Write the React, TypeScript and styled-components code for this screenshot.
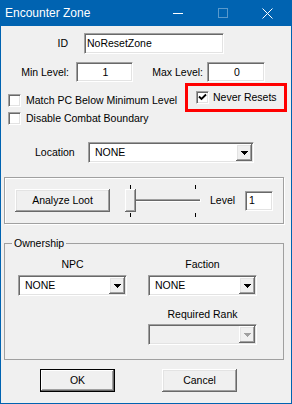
import React from "react";
import styled, { createGlobalStyle, css } from "styled-components";

const GlobalStyle = createGlobalStyle`
  html, body {
    margin: 0;
    padding: 0;
    background: #f0f0f0;
  }
`;

// shared 3D edges
const sunken = css`
  box-sizing: border-box;
  border-style: solid;
  border-width: 1px;
  border-color: #a0a0a0 #ffffff #ffffff #a0a0a0;
  box-shadow: inset 1px 1px 0 #696969, inset -1px -1px 0 #e3e3e3;
`;

const raised = css`
  box-sizing: border-box;
  background: #f0f0f0;
  box-shadow: inset -1px -1px 0 #696969, inset 1px 1px 0 #ffffff,
    inset -2px -2px 0 #a0a0a0, inset 2px 2px 0 #e3e3e3;
`;

const Window = styled.div`
  width: 292px;
  height: 404px;
  box-sizing: border-box;
  display: flex;
  flex-direction: column;
  border: 1px solid #0063b1;
  border-top: 0;
  background: #f0f0f0;
  color: #000;
  font-family: "Liberation Sans", Arial, sans-serif;
  font-size: 10.5px;
  line-height: 13px;
  overflow: hidden;
`;

const TitleBar = styled.div`
  flex: none;
  height: 26px;
  margin: 0 -1px;
  padding: 0 2px 0 5px;
  display: flex;
  align-items: center;
  background: #0063b1;
  color: #fff;
`;

const Title = styled.span`
  flex: 1;
  font-size: 12px;
`;

const CaptionButton = styled.span`
  width: 45px;
  height: 26px;
  display: flex;
  align-items: center;
  justify-content: center;
`;

const MinGlyph = styled.span`
  width: 10px;
  height: 1px;
  background: #fff;
`;

const MaxGlyph = styled.span`
  width: 10px;
  height: 10px;
  box-sizing: border-box;
  border: 1px solid rgba(255, 255, 255, 0.35);
`;

const Row = styled.div<{ $mt: number; $h: number }>`
  flex: none;
  display: flex;
  align-items: center;
  margin-top: ${(p) => p.$mt}px;
  height: ${(p) => p.$h}px;
`;

const Label = styled.span<{ $w?: number; $ml?: number; $right?: boolean }>`
  flex: none;
  white-space: nowrap;
  width: ${(p) => (p.$w ? `${p.$w}px` : "auto")};
  margin-left: ${(p) => p.$ml ?? 0}px;
  text-align: ${(p) => (p.$right ? "right" : "left")};
`;

const TextBox = styled.div<{ $w: number; $h: number; $ml: number; $center?: boolean; $pad?: number }>`
  ${sunken};
  flex: none;
  width: ${(p) => p.$w}px;
  height: ${(p) => p.$h}px;
  margin-left: ${(p) => p.$ml}px;
  padding-left: ${(p) => p.$pad ?? 2}px;
  background: #fff;
  display: flex;
  align-items: center;
  justify-content: ${(p) => (p.$center ? "center" : "flex-start")};
`;

const CheckColumn = styled.div`
  flex: none;
  align-self: stretch;
  width: 184px;
  box-sizing: border-box;
  padding: 11px 0 0 7px;
  display: flex;
  flex-direction: column;
  gap: 5px;
`;

const CheckRow = styled.label`
  height: 13px;
  display: flex;
  align-items: center;
  gap: 5px;
  white-space: nowrap;
`;

const Box = styled.span`
  ${sunken};
  flex: none;
  width: 13px;
  height: 13px;
  background: #fff;
  display: flex;
  align-items: center;
  justify-content: center;
`;

const Highlight = styled.div`
  flex: none;
  align-self: flex-start;
  width: 102px;
  height: 29px;
  box-sizing: border-box;
  border: 3px solid #ff0000;
  padding-left: 8px;
  display: flex;
  align-items: center;
  gap: 4px;
  white-space: nowrap;
`;

const Combo = styled.div<{ $w: number; $ml?: number; $mt?: number; $disabled?: boolean }>`
  ${sunken};
  flex: none;
  width: ${(p) => p.$w}px;
  height: 21px;
  margin-left: ${(p) => p.$ml ?? 0}px;
  margin-top: ${(p) => p.$mt ?? 0}px;
  padding: 1px;
  display: flex;
  background: ${(p) => (p.$disabled ? "#f0f0f0" : "#fff")};
`;

const ComboText = styled.span`
  flex: 1;
  padding-left: 5px;
  display: flex;
  align-items: center;
`;

const DropButton = styled.span`
  ${raised};
  width: 16px;
  display: flex;
  align-items: center;
  justify-content: center;
`;

const Group = styled.div`
  flex: none;
  margin: 14px 0 0 3px;
  width: 280px;
  height: 47px;
  box-sizing: border-box;
  border: 1px solid #a0a0a0;
  box-shadow: inset 1px 1px 0 #fff, 1px 1px 0 #fff;
  display: flex;
  align-items: center;
`;

const Button = styled.button<{ $w: number; $h?: number; $ml: number; $default?: boolean }>`
  ${raised};
  flex: none;
  width: ${(p) => p.$w}px;
  height: ${(p) => p.$h ?? 23}px;
  margin: 0 0 0 ${(p) => p.$ml}px;
  padding: 0;
  border: 0;
  font: inherit;
  color: #000;
  ${(p) =>
    p.$default &&
    css`
      box-shadow: inset 0 0 0 1px #000, inset -2px -2px 0 #696969, inset 2px 2px 0 #ffffff,
        inset -3px -3px 0 #a0a0a0;
    `}
`;

const SliderSvg = styled.svg`
  flex: none;
  display: block;
  margin-left: 15px;
`;

const Ownership = styled.fieldset`
  flex: none;
  margin: 13px 0 0 3px;
  width: 280px;
  height: 123px;
  box-sizing: border-box;
  padding: 0;
  min-inline-size: 0;
  border: 1px solid #a0a0a0;
`;

const Legend = styled.legend`
  margin-left: 7px;
  padding: 0 2px;
  line-height: 13px;
`;

const Columns = styled.div`
  display: flex;
  gap: 21px;
  padding-left: 13px;
`;

const Column = styled.div`
  width: 109px;
  display: flex;
  flex-direction: column;
  align-items: center;
`;

const ColumnLabel = styled.span<{ $mt: number }>`
  margin-top: ${(p) => p.$mt}px;
  white-space: nowrap;
`;

const Check = () => (
  <svg width="9" height="9" viewBox="0 0 9 9">
    <path d="M1 3.5 L3.5 6 L8 1.5" fill="none" stroke="#000" strokeWidth="1.8" />
  </svg>
);

const Arrow = ({ disabled }: { disabled?: boolean }) => (
  <svg width="7" height="4" viewBox="0 0 7 4" shapeRendering="crispEdges">
    <polygon points="0,0 7,0 3.5,4" fill={disabled ? "#a0a0a0" : "#000"} />
  </svg>
);

const CloseGlyph = () => (
  <svg width="11" height="11" viewBox="0 0 11 11">
    <path d="M0.5 0.5 L10.5 10.5 M10.5 0.5 L0.5 10.5" stroke="#fff" strokeWidth="1" />
  </svg>
);

const Slider = () => (
  <SliderSvg width={80} height={32} viewBox="0 0 80 32" shapeRendering="crispEdges">
    <rect x={5} y={0} width={1} height={4} fill="#000" />
    <rect x={70} y={0} width={1} height={4} fill="#000" />
    <rect x={5} y={28} width={1} height={4} fill="#000" />
    <rect x={70} y={28} width={1} height={4} fill="#000" />
    <rect x={8} y={14} width={67} height={1} fill="#a0a0a0" />
    <rect x={8} y={15} width={67} height={1} fill="#696969" />
    <rect x={8} y={16} width={68} height={1} fill="#fff" />
    <rect x={75} y={14} width={1} height={2} fill="#fff" />
    <rect x={0} y={4} width={11} height={23} fill="#f0f0f0" />
    <rect x={0} y={4} width={10} height={1} fill="#fff" />
    <rect x={0} y={4} width={1} height={22} fill="#fff" />
    <rect x={10} y={4} width={1} height={23} fill="#696969" />
    <rect x={0} y={26} width={11} height={1} fill="#696969" />
    <rect x={9} y={5} width={1} height={21} fill="#a0a0a0" />
    <rect x={1} y={25} width={9} height={1} fill="#a0a0a0" />
  </SliderSvg>
);

const ComboBox = ({ w, ml, mt, value, disabled }: { w: number; ml?: number; mt?: number; value?: string; disabled?: boolean }) => (
  <Combo $w={w} $ml={ml} $mt={mt} $disabled={disabled}>
    <ComboText>{value}</ComboText>
    <DropButton>
      <Arrow disabled={disabled} />
    </DropButton>
  </Combo>
);

export default function App() {
  return (
    <>
      <GlobalStyle />
      <Window>
        <TitleBar>
          <Title>Encounter Zone</Title>
          <CaptionButton>
            <MinGlyph />
          </CaptionButton>
          <CaptionButton>
            <MaxGlyph />
          </CaptionButton>
          <CaptionButton>
            <CloseGlyph />
          </CaptionButton>
        </TitleBar>

        <Row $mt={7} $h={21}>
          <Label $w={67} $right>
            ID
          </Label>
          <TextBox $w={140} $h={21} $ml={16}>
            NoResetZone
          </TextBox>
        </Row>

        <Row $mt={8} $h={20}>
          <Label $w={68} $right>
            Min Level:
          </Label>
          <TextBox $w={57} $h={20} $ml={7} $center>
            1
          </TextBox>
          <Label $w={70} $right>
            Max Level:
          </Label>
          <TextBox $w={58} $h={20} $ml={4} $center>
            0
          </TextBox>
        </Row>

        <Row $mt={1} $h={43}>
          <CheckColumn>
            <CheckRow>
              <Box />
              Match PC Below Minimum Level
            </CheckRow>
            <CheckRow>
              <Box />
              Disable Combat Boundary
            </CheckRow>
          </CheckColumn>
          <Highlight>
            <Box>
              <Check />
            </Box>
            Never Resets
          </Highlight>
        </Row>

        <Row $mt={16} $h={21}>
          <Label $w={53} $ml={34}>
            Location
          </Label>
          <ComboBox w={166} value="NONE" />
        </Row>

        <Group>
          <Button $w={95} $ml={10}>
            Analyze Loot
          </Button>
          <Slider />
          <Label $ml={5}>Level</Label>
          <TextBox $w={28} $h={20} $ml={10} $pad={3}>
            1
          </TextBox>
        </Group>

        <Ownership>
          <Legend>Ownership</Legend>
          <Columns>
            <Column>
              <ColumnLabel $mt={8}>NPC</ColumnLabel>
              <ComboBox w={109} mt={4} value="NONE" />
            </Column>
            <Column>
              <ColumnLabel $mt={8}>Faction</ColumnLabel>
              <ComboBox w={109} mt={4} value="NONE" />
              <ColumnLabel $mt={12}>Required Rank</ColumnLabel>
              <ComboBox w={109} mt={3} disabled />
            </Column>
          </Columns>
        </Ownership>

        <Row $mt={9} $h={23}>
          <Button $w={75} $ml={39} $default>
            OK
          </Button>
          <Button $w={75} $ml={47}>
            Cancel
          </Button>
        </Row>
      </Window>
    </>
  );
}
